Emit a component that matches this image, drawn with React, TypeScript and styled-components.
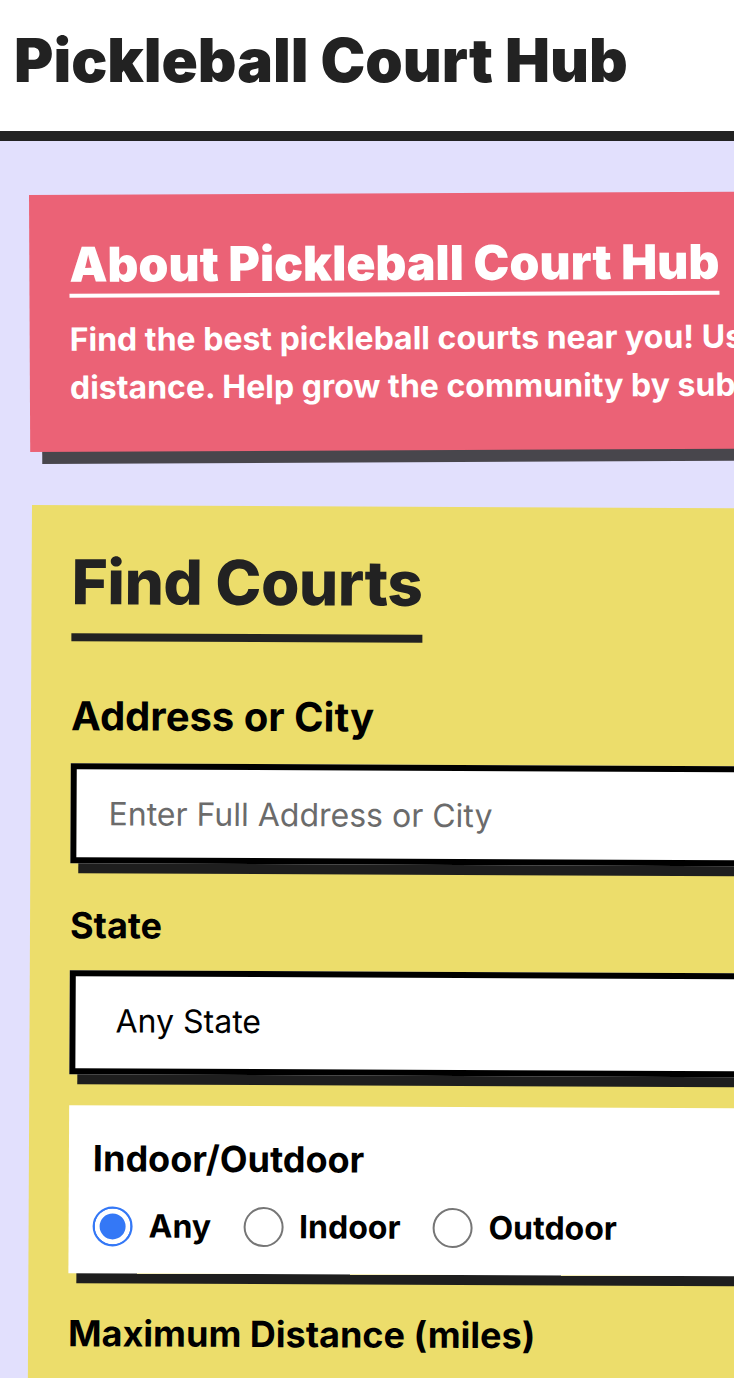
import React from "react";
import styled, { createGlobalStyle } from "styled-components";

const GlobalStyle = createGlobalStyle`
  html, body { margin: 0; padding: 0; }
  body {
    background: #e2e0fd;
    font-family: Inter, "Noto Sans", sans-serif;
    overflow-x: hidden;
  }
  * { box-sizing: border-box; }
`;

const Header = styled.header`
  background: #ffffff;
  padding: 24px 14px 35px;
  border-bottom: 10px solid #222222;
`;

const Title = styled.h1`
  margin: 0;
  font-size: 60px;
  line-height: 72px;
  font-weight: 900;
  color: #222222;
  letter-spacing: 0;
  white-space: nowrap;
`;

const Main = styled.main`
  display: flex;
  flex-direction: column;
  align-items: flex-start;
  gap: 53px;
  padding: 54px 0 80px 29px;
`;

const Card = styled.section<{ $bg: string; $tilt: number; $shift?: number; $shadow: string }>`
  flex-shrink: 0;
  width: 1100px;
  margin-left: ${(p) => p.$shift ?? 0}px;
  background: ${(p) => p.$bg};
  padding: 41px 40px 40px 40px;
  box-shadow: 12px 12px 0 ${(p) => p.$shadow};
  transform: rotate(${(p) => p.$tilt}deg);
  transform-origin: 0 0;
`;

const AboutHeading = styled.h2`
  display: block;
  width: fit-content;
  margin: 0 0 18px;
  font-size: 48px;
  line-height: 1.2;
  font-weight: 900;
  letter-spacing: 0;
  color: #ffffff;
  border-bottom: 4px solid #ffffff;
  white-space: nowrap;
`;

const AboutText = styled.p`
  margin: 0;
  font-size: 32px;
  line-height: 1.5;
  font-weight: 700;
  color: #ffffff;
  white-space: nowrap;
`;

const SectionHeading = styled.h2`
  display: block;
  width: fit-content;
  margin: -1px 0 50px;
  padding-bottom: 14px;
  font-size: 62px;
  line-height: 1.2;
  font-weight: 800;
  letter-spacing: -0.5px;
  color: #222222;
  border-bottom: 8px solid #222222;
`;

const Field = styled.div<{ $after?: number }>`
  display: flex;
  flex-direction: column;
  margin-bottom: ${(p) => p.$after ?? 40}px;
`;

const Label = styled.label<{ $size?: number }>`
  display: block;
  margin-bottom: 23px;
  font-size: ${(p) => p.$size ?? 36}px;
  line-height: normal;
  font-weight: 700;
  color: #000000;
`;

const TextInput = styled.input`
  display: block;
  width: 100%;
  height: 100px;
  padding: 26px 32px 26px;
  border: 6px solid #000000;
  background: #ffffff;
  box-shadow: 8px 10px 0 #1e1e1e;
  font-family: Inter, "Noto Sans", sans-serif;
  font-size: 32px;
  line-height: 38px;
  color: #000000;
  outline: none;
  border-radius: 0;

  &::placeholder {
    color: #6b6b6b;
  }
`;

const Select = styled.select`
  display: block;
  width: 100%;
  height: 104px;
  padding: 0 40px 3px;
  border: 6px solid #000000;
  background: #ffffff;
  box-shadow: 8px 10px 0 #1e1e1e;
  font-family: Inter, "Noto Sans", sans-serif;
  font-size: 32px;
  color: #000000;
  appearance: none;
  border-radius: 0;
  outline: none;
`;

const RadioBox = styled.fieldset`
  margin: 0 0 38px;
  padding: 31px 24px 27px;
  border: none;
  background: #ffffff;
  box-shadow: 8px 10px 0 #1e1e1e;
  min-width: 0;
`;

const Legend = styled.div`
  margin-bottom: 26px;
  font-size: 36px;
  line-height: normal;
  font-weight: 700;
  color: #000000;
`;

const RadioRow = styled.div`
  display: flex;
  align-items: center;
  gap: 32px;
`;

const RadioOption = styled.label`
  display: flex;
  align-items: center;
  gap: 16px;
  font-size: 32px;
  line-height: 40px;
  font-weight: 700;
  color: #000000;
  cursor: pointer;
`;

const Radio = styled.input`
  appearance: none;
  margin: 0;
  width: 40px;
  height: 40px;
  border-radius: 50%;
  border: 2px solid #767676;
  background: #ffffff;
  flex-shrink: 0;

  &:checked {
    border-color: #3478f6;
    background: #3478f6;
    box-shadow: inset 0 0 0 5px #ffffff;
  }
`;

const SearchButton = styled.button`
  margin-top: 16px;
  align-self: flex-start;
  padding: 24px 48px;
  border: 6px solid #000000;
  background: #eb6276;
  box-shadow: 8px 10px 0 #1e1e1e;
  font-family: Inter, "Noto Sans", sans-serif;
  font-size: 32px;
  font-weight: 800;
  color: #ffffff;
`;

export default function App() {
  const [type, setType] = React.useState("any");
  return (
    <>
      <GlobalStyle />
      <Header>
        <Title>Pickleball Court Hub</Title>
      </Header>
      <Main>
        <Card $bg="#eb6276" $tilt={-0.27} $shadow="#48464c">
          <AboutHeading>About Pickleball Court Hub</AboutHeading>
          <AboutText>
            Find the best pickleball courts near you! Use the filters to search by state, type and
            <br />
            distance. Help grow the community by submitting courts that are missing from the list.
          </AboutText>
        </Card>
        <Card $bg="#ecdd6b" $tilt={0.27} $shift={3} $shadow="#222222">
          <SectionHeading>Find Courts</SectionHeading>
          <Field>
            <Label htmlFor="address" $size={40}>Address or City</Label>
            <TextInput id="address" type="text" placeholder="Enter Full Address or City" />
          </Field>
          <Field $after={31}>
            <Label htmlFor="state">State</Label>
            <Select id="state" defaultValue="">
              <option value="">Any State</option>
              <option value="CA">California</option>
              <option value="TX">Texas</option>
              <option value="FL">Florida</option>
            </Select>
          </Field>
          <RadioBox>
            <Legend>Indoor/Outdoor</Legend>
            <RadioRow>
              {[
                ["any", "Any"],
                ["indoor", "Indoor"],
                ["outdoor", "Outdoor"],
              ].map(([value, text]) => (
                <RadioOption key={value}>
                  <Radio
                    type="radio"
                    name="type"
                    value={value}
                    checked={type === value}
                    onChange={() => setType(value)}
                  />
                  {text}
                </RadioOption>
              ))}
            </RadioRow>
          </RadioBox>
          <Field>
            <Label htmlFor="distance">Maximum Distance (miles)</Label>
            <TextInput id="distance" type="number" placeholder="Any Distance" />
          </Field>
          <SearchButton type="button">Search Courts</SearchButton>
        </Card>
      </Main>
    </>
  );
}
